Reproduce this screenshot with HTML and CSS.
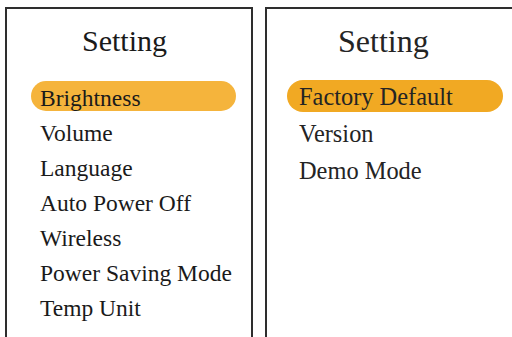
FILE: index.html
```html
<!DOCTYPE html>
<html>
<head>
<meta charset="utf-8">
<link rel="stylesheet" href="styles.css">
</head>
<body>
<div class="screens">
  <section class="panel panel-left">
    <h1 class="title">Setting</h1>
    <ul class="menu">
      <li class="item active">Brightness</li>
      <li class="item">Volume</li>
      <li class="item">Language</li>
      <li class="item">Auto Power Off</li>
      <li class="item">Wireless</li>
      <li class="item">Power Saving Mode</li>
      <li class="item">Temp Unit</li>
    </ul>
  </section>
  <section class="panel panel-right">
    <h1 class="title">Setting</h1>
    <ul class="menu">
      <li class="item active">Factory Default</li>
      <li class="item">Version</li>
      <li class="item">Demo Mode</li>
    </ul>
  </section>
</div>
</body>
</html>
```
FILE: styles.css
```css
html, body {
  margin: 0;
  padding: 0;
  background: #ffffff;
  overflow: hidden;
  width: 512px;
  height: 337px;
}
body {
  font-family: "Liberation Serif", "Times New Roman", serif;
  color: #1a1a1a;
}
.screens {
  display: flex;
  align-items: flex-start;
  gap: 12px;
  padding: 7px 0 0 5px;
  overflow: hidden;
  height: 330px;
}
.panel {
  flex: none;
  height: 330px;
  border: 2px solid #2e2e2e;
  border-bottom: none;
  box-sizing: border-box;
  display: flex;
  flex-direction: column;
}
.panel-left {
  width: 248px;
}
.panel-right {
  width: 250px;
  border-right: none;
}
.title {
  margin: 0;
  font-weight: normal;
  line-height: 36px;
}
.menu {
  list-style: none;
  margin: 0;
  padding: 0;
}
.item {
  box-sizing: border-box;
  white-space: nowrap;
}
.panel-left .title {
  font-size: 30px;
  margin: 14px 0 0 75px;
}
.panel-left .menu {
  margin: 22px 0 0 24px;
}
.panel-left .item {
  width: 205px;
  height: 30px;
  line-height: 30px;
  padding: 2px 0 0 9px;
  margin-bottom: 5px;
  font-size: 23.5px;
  border-radius: 15px;
}
.panel-left .item.active {
  background: #f5b43c;
}
.panel-right .title {
  font-size: 32px;
  margin: 14px 0 0 71px;
  color: #242424;
}
.panel-right .menu {
  margin: 21px 0 0 20px;
}
.panel-right .item {
  width: 216px;
  height: 32px;
  line-height: 32px;
  padding: 1px 0 0 12px;
  margin-bottom: 5px;
  font-size: 24.4px;
  border-radius: 16px;
  color: #242424;
}
.panel-right .item.active {
  background: #f1a923;
}
```
